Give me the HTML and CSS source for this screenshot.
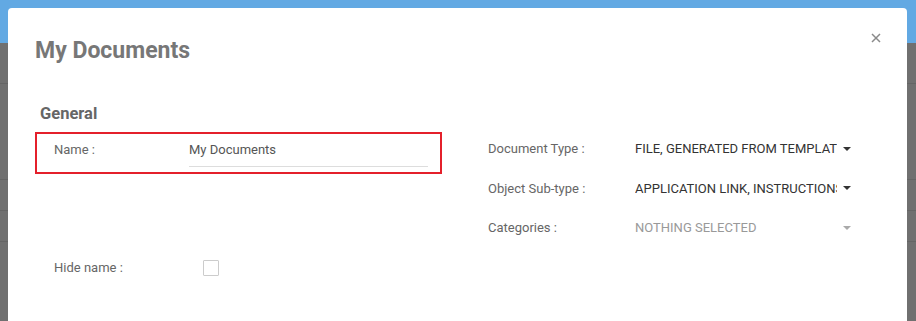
FILE: index.html
```html
<!DOCTYPE html>
<html lang="en">
<head>
    <meta charset="UTF-8">
    <title>My Documents</title>
    <link rel="stylesheet" href="styles.css">
</head>
<body>

<div class="backdrop">
    <div class="topbar"></div>
    <div class="grid-behind">
        <div class="row-behind" style="height: 40px"></div>
        <div class="row-behind" style="height: 95px"></div>
        <div class="row-behind" style="height: 30px"></div>
        <div class="row-behind" style="height: 30px"></div>
    </div>
</div>

<div class="modal">
    <button class="close-button" aria-label="Close">
        <svg width="10" height="10" viewBox="0 0 10 10">
            <path d="M1 1 L9 9 M9 1 L1 9" stroke="#8a8a8a" stroke-width="1.5" fill="none"/>
        </svg>
    </button>

    <h1 class="modal-title">My Documents</h1>

    <div class="modal-body">
        <div class="col-left">
            <h2 class="section-title">General</h2>

            <div class="field-name">
                <label class="field-label">Name :</label>
                <div class="text-input">My Documents</div>
            </div>

            <div class="field-hide">
                <label class="field-label">Hide name :</label>
                <span class="checkbox"></span>
            </div>
        </div>

        <div class="col-right">
            <div class="select-row">
                <label class="select-label">Document Type :</label>
                <div class="select-value" title="FILE, GENERATED FROM TEMPLATE">FILE, GENERATED FROM TEMPLATE</div>
                <span class="caret"></span>
            </div>
            <div class="select-row">
                <label class="select-label">Object Sub-type :</label>
                <div class="select-value" title="APPLICATION LINK, INSTRUCTIONS">APPLICATION LINK, INSTRUCTIONS</div>
                <span class="caret"></span>
            </div>
            <div class="select-row">
                <label class="select-label">Categories :</label>
                <div class="select-value placeholder">NOTHING SELECTED</div>
                <span class="caret light"></span>
            </div>
        </div>
    </div>
</div>

</body>
</html>
```

FILE: styles.css
```css
body {
    font-family: Roboto, "Liberation Sans", Arial, sans-serif;
    margin: 0;
    padding: 0;
    width: 916px;
    height: 321px;
    overflow: hidden;
    background-color: #707070;
}
.backdrop {
    height: 321px;
}
.topbar {
    height: 43px;
    background-color: #62a9e3;
}
.row-behind {
    border-bottom: 1px solid #656565;
}
.modal {
    position: absolute;
    top: 8px;
    left: 8px;
    width: 899px;
    height: 313px;
    overflow: hidden;
    background-color: #ffffff;
    border-radius: 4px 4px 0 0;
    box-sizing: border-box;
    padding: 28px 0 0 27px;
}
.close-button {
    position: absolute;
    top: 25px;
    right: 26px;
    width: 10px;
    height: 10px;
    padding: 0;
    border: none;
    background: none;
    display: flex;
}
.modal-title {
    margin: 0;
    height: 30px;
    line-height: 30px;
    font-size: 23px;
    font-weight: 700;
    color: #777777;
}
.modal-body {
    display: flex;
    gap: 46px;
    margin-top: 37px;
}
.col-left {
    width: 407px;
}
.section-title {
    margin: 0 0 0 5px;
    height: 22px;
    line-height: 22px;
    font-size: 16.5px;
    font-weight: 700;
    color: #666666;
}
.field-label {
    font-size: 13px;
    line-height: 20px;
    color: #666666;
}
.field-name {
    margin-top: 7px;
    height: 42px;
    box-sizing: border-box;
    border: 2px solid #e4202b;
    display: flex;
    align-items: flex-start;
    padding: 5px 0 0 17px;
}
.field-name .field-label {
    width: 135px;
    margin-top: 1px;
}
.text-input {
    width: 239px;
    height: 28px;
    box-sizing: border-box;
    padding-top: 1px;
    border-bottom: 1px solid #dddddd;
    font-size: 13px;
    line-height: 20px;
    color: #555555;
}
.field-hide {
    margin-top: 84px;
    display: flex;
    align-items: center;
    padding-left: 19px;
}
.field-hide .field-label {
    width: 149px;
}
.checkbox {
    width: 16px;
    height: 16px;
    box-sizing: border-box;
    border: 1px solid #cccccc;
    border-radius: 1px;
}
.col-right {
    padding-top: 26px;
}
.select-row {
    height: 39.5px;
    display: flex;
    align-items: center;
}
.select-label {
    width: 147px;
    font-size: 13px;
    color: #666666;
}
.select-value {
    width: 202px;
    overflow: hidden;
    white-space: nowrap;
    font-size: 13px;
    color: #333333;
}
.select-value.placeholder {
    color: #999999;
}
.caret {
    margin-left: 6px;
    width: 0;
    height: 0;
    border-left: 4px solid transparent;
    border-right: 4px solid transparent;
    border-top: 4px solid #333333;
}
.caret.light {
    border-top-color: #aaaaaa;
}
```
